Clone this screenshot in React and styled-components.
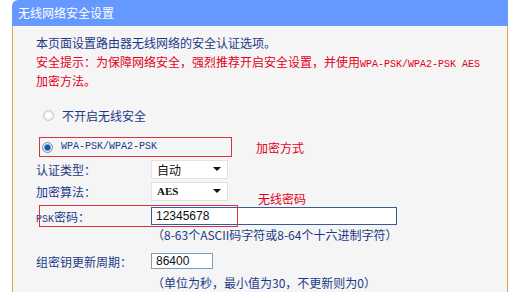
import React from 'react'
import styled, { createGlobalStyle } from 'styled-components';

const GlobalStyle = createGlobalStyle`
  html, body {
    margin: 0;
    padding: 0;
    background: #ffffff;
  }
  body {
    font-family: "Noto Sans CJK SC", "Liberation Sans", sans-serif;
    font-size: 12px;
  }
`;

const BLUE = '#1c3a88';
const RED = '#e3001b';

const App = () => {
  return (
    <>
      <GlobalStyle />
      <Panel>
        <Header>无线网络安全设置</Header>
        <Body>
          <Intro>
            <p>本页面设置路由器无线网络的安全认证选项。</p>
            <Warn>
              安全提示：为保障网络安全，强烈推荐开启安全设置，并使用<Mono>WPA-PSK/WPA2-PSK AES</Mono>加密方法。
            </Warn>
          </Intro>

          <RadioRow>
            <Radio />
            <span>不开启无线安全</span>
          </RadioRow>

          <RadioRow $boxed>
            <Radio $checked />
            <Mono>WPA-PSK/WPA2-PSK</Mono>
            <Note style={{ left: 216, top: 2 }}>加密方式</Note>
          </RadioRow>

          <FieldRow $gap={1}>
            <Label>认证类型：</Label>
            <Select>
              <span>自动</span>
              <Arrow />
            </Select>
          </FieldRow>

          <FieldRow>
            <Label>加密算法：</Label>
            <Select>
              <SerifText>AES</SerifText>
              <Arrow />
            </Select>
            <Note style={{ left: 222, top: 11 }}>无线密码</Note>
          </FieldRow>

          <FieldRow $gap={3}>
            <Label><Mono>PSK</Mono>密码：</Label>
            <Input $width={246} $dark>12345678</Input>
            <Marker />
          </FieldRow>

          <Hint>（8-63个ASCII码字符或8-64个十六进制字符）</Hint>

          <FieldRow $gap={7}>
            <Label>组密钥更新周期：</Label>
            <Input $width={62}>86400</Input>
          </FieldRow>

          <Hint $gap={3}>（单位为秒，最小值为30，不更新则为0）</Hint>
        </Body>
      </Panel>
    </>
  )
}

export default App;


const Panel = styled.section`
  margin-left: 12px;
  width: 496px;
  box-sizing: border-box;
`;

const Header = styled.div`
  height: 26px;
  box-sizing: border-box;
  padding: 4px 0 0 6px;
  background: #6699ff;
  border-radius: 6px 0 0 0;
  color: #ffffff;
  font-size: 12px;
  line-height: 18px;
`;

const Body = styled.div`
  background: #f5f5f5;
  border-left: 1px solid #e6a24a;
  border-right: 1px solid #e6a24a;
  padding: 7px 0 2px 23px;
  height: 266px;
  box-sizing: border-box;
  color: ${BLUE};
`;

const Intro = styled.div`
  line-height: 19px;
  padding-right: 20px;
  p {
    margin: 0;
  }
`;

const Warn = styled.p`
  color: ${RED};
`;

const Mono = styled.span`
  font-family: "Liberation Mono", monospace;
  font-size: 10px;
  line-height: 1;
`;

const SerifText = styled.span`
  font-family: "Liberation Serif", serif;
  font-size: 11px;
  font-weight: bold;
`;

const RadioRow = styled.div`
  position: relative;
  display: flex;
  align-items: center;
  gap: 8px;
  margin-left: 3px;
  margin-top: ${p => (p.$boxed ? '11px' : '14px')};
  height: ${p => (p.$boxed ? '20px' : '22px')};
  width: 193px;
  box-sizing: border-box;
  padding-left: ${p => (p.$boxed ? '2px' : '3px')};
  border: ${p => (p.$boxed ? '1px solid #d8333f' : '1px solid transparent')};
  color: ${BLUE};
`;

const Radio = styled.span`
  width: 11px;
  height: 11px;
  border-radius: 50%;
  box-sizing: border-box;
  border: 1px solid ${p => (p.$checked ? '#7b8ea6' : '#c4c8cc')};
  background: ${p =>
    p.$checked
      ? 'radial-gradient(circle, #1a5aa8 0 2.5px, #6aa0d8 3px, #e8eef5 4px)'
      : 'radial-gradient(circle, #ffffff 0 2px, #e3e6ea 5px)'};
  flex: none;
`;

const Note = styled.span`
  position: absolute;
  color: ${RED};
  font-size: 12px;
  line-height: 16px;
  white-space: nowrap;
`;

const FieldRow = styled.div`
  position: relative;
  display: flex;
  align-items: center;
  height: 22px;
  margin-top: ${p => p.$gap ?? 0}px;
`;

const Label = styled.span`
  width: 115px;
  flex: none;
  color: ${BLUE};
`;

const Select = styled.div`
  width: 77px;
  height: 19px;
  box-sizing: border-box;
  display: flex;
  align-items: center;
  justify-content: space-between;
  padding: 0 6px 0 5px;
  background: #ffffff;
  border: 1px solid #e2e2e2;
  color: #111111;
  font-size: 12px;
`;

const Arrow = styled.span`
  width: 0;
  height: 0;
  border-left: 4px solid transparent;
  border-right: 4px solid transparent;
  border-top: 4px solid #111111;
`;

const Input = styled.div`
  width: ${p => p.$width}px;
  height: ${p => (p.$dark ? '18px' : '16px')};
  box-sizing: border-box;
  padding-left: 4px;
  display: flex;
  align-items: center;
  background: #ffffff;
  border: 1px solid ${p => (p.$dark ? '#3a5a9c' : '#7f9db9')};
  color: #111111;
  font-family: "Liberation Sans", Arial, sans-serif;
  font-size: 12px;
`;

const Marker = styled.span`
  position: absolute;
  left: 3px;
  top: 0;
  width: 199px;
  height: 22px;
  box-sizing: border-box;
  border: 1px solid #d8333f;
  pointer-events: none;
`;

const Hint = styled.div`
  padding-left: 116px;
  height: 16px;
  line-height: 16px;
  margin-top: ${p => p.$gap ?? 0}px;
  color: ${BLUE};
`;
